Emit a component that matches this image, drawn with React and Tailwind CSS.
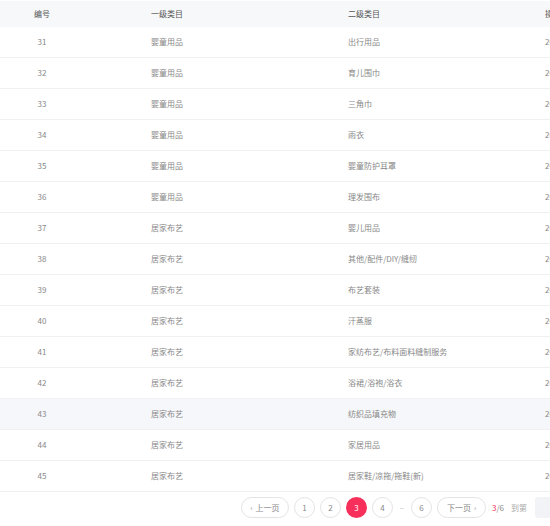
const rows = [
	[31, '婴童用品', '出行用品'],
	[32, '婴童用品', '育儿围巾'],
	[33, '婴童用品', '三角巾'],
	[34, '婴童用品', '雨衣'],
	[35, '婴童用品', '婴童防护耳罩'],
	[36, '婴童用品', '理发围布'],
	[37, '居家布艺', '婴儿用品'],
	[38, '居家布艺', '其他/配件/DIY/缝纫'],
	[39, '居家布艺', '布艺套装'],
	[40, '居家布艺', '汗蒸服'],
	[41, '居家布艺', '家纺布艺/布料面料缝制服务'],
	[42, '居家布艺', '浴裙/浴袍/浴衣'],
	[43, '居家布艺', '纺织品填充物'],
	[44, '居家布艺', '家居用品'],
	[45, '居家布艺', '居家鞋/凉拖/拖鞋(新)'],
];

const font = { fontFamily: '"Noto Sans CJK SC", "Noto Sans", sans-serif' };

const PageBtn = ({ children, active }) => (
	<div
		className={`w-[21px] h-[21px] shrink-0 rounded-full flex items-center justify-center text-[8px] ${
			active ? 'bg-[#f7305b] text-white' : 'border border-[#e3e3e6] text-[#888]'
		}`}>
		{children}
	</div>
);

const App = () => {
	return (
		<div className="w-[550px] h-[526px] bg-white overflow-hidden" style={font}>
			<div className="w-[600px] pt-[1px]">
				<div className="grid grid-cols-[151px_197px_197px_1fr] h-[26px] items-center bg-[#f7f8fa] text-[8px] text-[#555]">
					<div className="w-[84px] text-center">编号</div>
					<div>一级类目</div>
					<div>二级类目</div>
					<div>操作时间</div>
				</div>
				{rows.map(([id, a, b]) => (
					<div
						key={id}
						className={`grid grid-cols-[151px_197px_197px_1fr] h-[31px] items-center border-b border-[#f0f0f2] text-[8px] text-[#888] ${
							id === 43 ? 'bg-[#f6f7fa]' : ''
						}`}>
						<div className="w-[84px] text-center">{id}</div>
						<div>{a}</div>
						<div>{b}</div>
						<div>2020-03-18</div>
					</div>
				))}
			</div>
			<div className="w-[600px] flex items-center pl-[241px] pt-[5px] gap-[5px] text-[8px] text-[#888] whitespace-nowrap">
				<div className="w-[48px] h-[21px] shrink-0 rounded-full border border-[#e3e3e6] flex items-center justify-center gap-[3px]">
					<span className="text-[7px]">‹</span>
					<span>上一页</span>
				</div>
				<PageBtn>1</PageBtn>
				<PageBtn>2</PageBtn>
				<PageBtn active>3</PageBtn>
				<PageBtn>4</PageBtn>
				<div className="w-[8px] shrink-0 text-center text-[#bbb]">–</div>
				<PageBtn>6</PageBtn>
				<div className="w-[49px] h-[21px] shrink-0 rounded-full border border-[#e3e3e6] flex items-center justify-center gap-[3px]">
					<span>下一页</span>
					<span className="text-[7px]">›</span>
				</div>
				<div className="shrink-0 ml-[1px]">
					<span className="text-[#f7305b]">3</span>/6
				</div>
				<div className="shrink-0 ml-[2px] text-[#aaa]">到第</div>
				<div className="w-[26px] h-[21px] ml-[3px] rounded-[3px] bg-[#f2f3f7] shrink-0" />
			</div>
		</div>
	);
};

export default App;
